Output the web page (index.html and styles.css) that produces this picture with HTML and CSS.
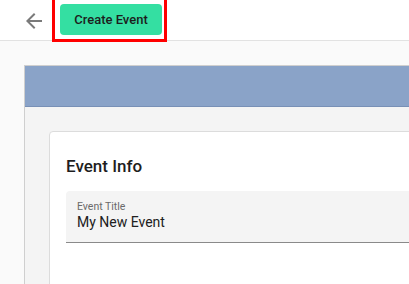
FILE: index.html
```html
<!DOCTYPE html>
<html lang="en">

<head>
    <meta charset="UTF-8">
    <meta name="viewport" content="width=device-width, initial-scale=1.0">
    <title>Create Event</title>
    <link rel="stylesheet" href="styles.css">
</head>

<body>
    <div class="topbar">
        <button class="back-btn" aria-label="Back">
            <svg width="24" height="24" viewBox="0 0 24 24">
                <path d="M20 11H7.83l5.59-5.59L12 4l-8 8 8 8 1.41-1.41L7.83 13H20v-2z" fill="#7a7a7a"></path>
            </svg>
        </button>
        <div class="create-wrap">
            <button class="btn-create">Create Event</button>
            <div class="highlight"></div>
        </div>
    </div>

    <div class="main">
        <div class="event-panel">
            <div class="panel-banner"></div>
            <div class="panel-body">
                <div class="info-card">
                    <h2 class="info-title">Event Info</h2>
                    <div class="field">
                        <label class="field-label" for="eventTitle">Event Title</label>
                        <input class="field-input" id="eventTitle" type="text" value="My New Event">
                    </div>
                </div>
            </div>
        </div>
    </div>
</body>

</html>
```

FILE: styles.css
```css
* {
    margin: 0;
    padding: 0;
    box-sizing: border-box;
    font-family: Roboto, "Liberation Sans", Arial, sans-serif;
}

body {
    height: 100vh;
    background-color: #fafafa;
    overflow: hidden;
}

.topbar {
    display: flex;
    align-items: center;
    height: 41px;
    padding-left: 22px;
    background-color: #fff;
    border-bottom: 1px solid #e2e2e2;
}

.back-btn {
    display: flex;
    width: 24px;
    height: 24px;
    margin-top: 2px;
    border: none;
    background: none;
    cursor: pointer;
}

.create-wrap {
    position: relative;
    margin-left: 14px;
    margin-top: -1px;
}

.btn-create {
    display: block;
    width: 102px;
    height: 31px;
    background-color: #34dfa2;
    color: #1d1d1d;
    border: none;
    border-radius: 4px;
    font-size: 13px;
    font-weight: 500;
    cursor: pointer;
}

.highlight {
    position: absolute;
    left: -8px;
    right: -5px;
    top: -10px;
    bottom: -7px;
    border: 3px solid #ff0000;
    pointer-events: none;
}

.main {
    padding: 24px 0 0 24px;
}

.event-panel {
    width: 640px;
    border: 1px solid #cfcfcf;
    background-color: #f4f4f4;
}

.panel-banner {
    height: 41px;
    background-color: #8aa3c8;
    border-bottom: 1px solid #7890b6;
}

.panel-body {
    padding: 24px;
}

.info-card {
    background-color: #fff;
    border: 1px solid #dcdcdc;
    border-radius: 4px;
    padding: 24px 16px 120px;
}

.info-title {
    font-size: 17px;
    font-weight: 500;
    color: #1e1e1e;
    line-height: 20px;
    margin-bottom: 15px;
}

.field {
    display: flex;
    flex-direction: column;
    height: 52px;
    padding: 10px 11px 0;
    background-color: #f4f4f4;
    border-radius: 4px 4px 0 0;
    border-bottom: 1px solid #8a8a8a;
}

.field-label {
    font-size: 10.5px;
    line-height: 12px;
    color: #6a6a6a;
}

.field-input {
    border: none;
    background: none;
    outline: none;
    font-size: 14px;
    line-height: 17px;
    color: #202020;
    padding: 1px 0 0;
}
```
